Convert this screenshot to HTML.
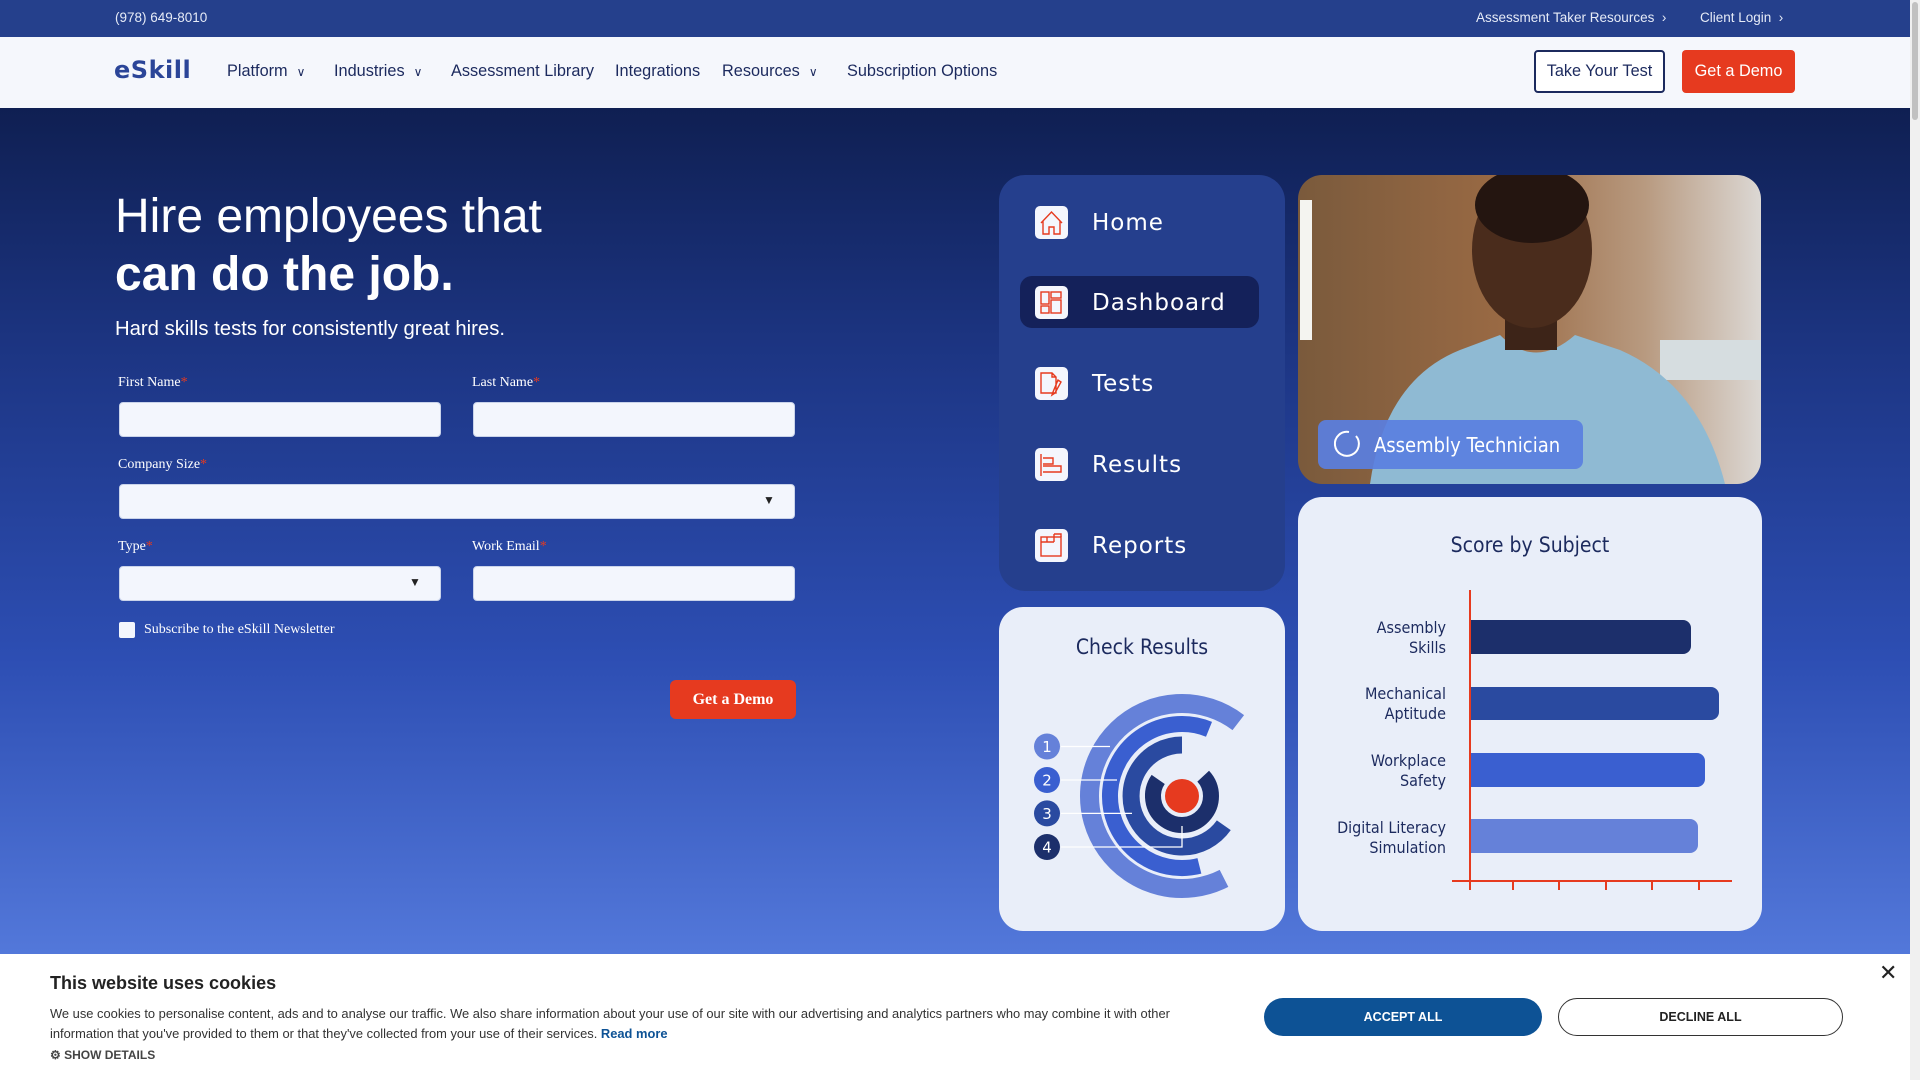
<!DOCTYPE html>
<html><head><meta charset="utf-8"><style>
*{margin:0;padding:0;box-sizing:border-box}
body{width:1920px;height:1080px;overflow:hidden;position:relative;font-family:"Liberation Sans",sans-serif;background:#fff}
.a{position:absolute;white-space:nowrap}
.top{left:0;top:0;width:1910px;height:37px;background:#25408c}
.nav{left:0;top:37px;width:1910px;height:71px;background:#f5f7fc}
.hero{left:0;top:108px;width:1910px;height:846px;background:linear-gradient(180deg,#0f1f52 0%,#1d3685 30%,#2d4eb3 65%,#5378da 100%)}
.navi{font-size:16.3px;color:#1c2a5e;top:62px}
.lbl{font-family:"Liberation Serif",serif;font-size:14px;color:#fff}
.lbl b{color:#e63a1f;font-weight:normal}
.inp{background:#f3f6fd;border:1px solid #c9d3ea;border-radius:4px;height:35px}
.mi{font-family:"DejaVu Sans",sans-serif;font-size:23px;color:#fff;letter-spacing:1px}
.sl{font-family:"DejaVu Sans Condensed","DejaVu Sans",sans-serif;font-size:16px;color:#1c2a5e;text-align:right;line-height:19px}
</style></head><body>
<div class="a top"></div>
<div class="a" style="left:115px;top:10px;font-size:13.5px;color:#e6ebf7">(978) 649-8010</div>
<div class="a" style="left:1476px;top:10px;font-size:13.5px;color:#e6ebf7">Assessment Taker Resources &nbsp;›</div>
<div class="a" style="left:1700px;top:10px;font-size:13.5px;color:#e6ebf7">Client Login &nbsp;›</div>
<div class="a nav"></div>
<div class="a" style="left:114px;top:56px;font-family:'DejaVu Sans',sans-serif;font-weight:bold;font-size:24px;color:#2b4598;letter-spacing:0.5px">eSkill</div>
<div class="a navi" style="left:227px">Platform &nbsp;<span style="font-size:12px">&#8744;</span></div>
<div class="a navi" style="left:334px">Industries &nbsp;<span style="font-size:12px">&#8744;</span></div>
<div class="a navi" style="left:451px">Assessment Library</div>
<div class="a navi" style="left:615px">Integrations</div>
<div class="a navi" style="left:722px">Resources &nbsp;<span style="font-size:12px">&#8744;</span></div>
<div class="a navi" style="left:847px">Subscription Options</div>
<div class="a" style="left:1534px;top:50px;width:131px;height:43px;border:2px solid #1c2a5e;border-radius:4px;background:#fff;font-size:16.3px;color:#1c2a5e;text-align:center;line-height:39px">Take Your Test</div>
<div class="a" style="left:1682px;top:50px;width:113px;height:43px;border-radius:4px;background:#e63a1f;font-size:16.3px;color:#fff;text-align:center;line-height:43px">Get a Demo</div>
<div class="a" style="left:1910px;top:0;width:10px;height:1080px;background:#f0f0f0"></div>
<div class="a" style="left:1912px;top:2px;width:6px;height:118px;background:#c1c1c1;border-radius:3px"></div>
<div class="a hero"></div>

<div class="a" style="left:115px;top:188px;font-size:48px;color:#fff;line-height:58px">Hire employees that<br><b>can do the job.</b></div>
<div class="a" style="left:115px;top:318px;font-size:20.3px;color:#fff">Hard skills tests for consistently great hires.</div>
<div class="a lbl" style="left:118px;top:375px">First Name<b>*</b></div>
<div class="a lbl" style="left:472px;top:375px">Last Name<b>*</b></div>
<div class="a inp" style="left:119px;top:402px;width:322px"></div>
<div class="a inp" style="left:473px;top:402px;width:322px"></div>
<div class="a lbl" style="left:118px;top:457px">Company Size<b>*</b></div>
<div class="a inp" style="left:119px;top:484px;width:676px"></div>
<div class="a" style="left:763px;top:493px;font-size:12px;color:#222">&#9660;</div>
<div class="a lbl" style="left:118px;top:539px">Type<b>*</b></div>
<div class="a lbl" style="left:472px;top:539px">Work Email<b>*</b></div>
<div class="a inp" style="left:119px;top:566px;width:322px"></div>
<div class="a" style="left:409px;top:575px;font-size:12px;color:#222">&#9660;</div>
<div class="a inp" style="left:473px;top:566px;width:322px"></div>
<div class="a" style="left:119px;top:622px;width:16px;height:16px;background:#f3f6fd;border-radius:2px"></div>
<div class="a lbl" style="left:144px;top:622px">Subscribe to the eSkill Newsletter</div>
<div class="a" style="left:670px;top:680px;width:126px;height:39px;background:#e63a1f;border-radius:6px;font-family:'Liberation Serif',serif;font-weight:bold;font-size:16px;color:#fff;text-align:center;line-height:39px">Get a Demo</div>

<div class="a" style="left:999px;top:175px;width:286px;height:416px;background:#253f8d;border-radius:26px"></div>
<div class="a" style="left:1020px;top:276px;width:239px;height:52px;background:#14215a;border-radius:12px"></div>
<svg class="a" style="left:0;top:0" width="1920" height="1080" viewBox="0 0 1920 1080">
<g fill="#f4f6fd"><rect x="1035" y="206" width="33" height="33" rx="5"/><rect x="1035" y="286" width="33" height="33" rx="5"/><rect x="1035" y="367" width="33" height="33" rx="5"/><rect x="1035" y="448" width="33" height="33" rx="5"/><rect x="1035" y="529" width="33" height="33" rx="5"/></g>
<g fill="none" stroke="#e63a1f" stroke-width="1.4">
<path d="M1041 223 L1051.5 212 L1062 223 M1043 221 V234 H1049 V227 H1054 V234 H1060 V221"/>
<rect x="1041" y="292" width="8" height="12"/><rect x="1041" y="306" width="8" height="7"/><rect x="1051" y="292" width="10" height="6"/><rect x="1051" y="300" width="10" height="13"/>
<path d="M1041 373 H1052 L1056 377 V393 H1041 Z M1052 373 V377 H1056 M1058 380 L1053 392 L1052 395 L1055 393 L1061 382 Z"/>
<path d="M1041 454 V476 M1043 458 H1053 V464 H1043 M1043 466 H1061 V472 H1043"/>
<rect x="1041" y="537" width="20" height="19"/><path d="M1041 542 H1054 M1047 537 V542 M1054 534 H1061 V537 M1054 534 V542"/>
</g>
<rect x="999" y="607" width="286" height="324" rx="24" fill="#e9eef9"/>
<rect x="1298" y="497" width="464" height="434" rx="24" fill="#e9eef9"/>
<g fill="none">
<path d="M1238.3 722.6 A92.5 92.5 0 1 0 1224 878.4" stroke="#6581d9" stroke-width="19"/>
<path d="M1209 729.3 A72 72 0 1 0 1199.4 865.9" stroke="#3a5fd0" stroke-width="16"/>
<path d="M1182 745 A51 51 0 1 0 1223.8 825.3" stroke="#2a4aa0" stroke-width="17"/>
<path d="M1203.2 776.2 A29 29 0 1 1 1158.2 779.4" stroke="#1c2f6b" stroke-width="16"/>
<g stroke="#fff" stroke-width="1.3"><path d="M1061 746.5 H1110 M1061 780 H1117 M1061 813.4 H1132 M1061 847 H1182 V826"/></g>
</g>
<circle cx="1182" cy="796" r="17" fill="#e63a1f"/>
<g font-family="DejaVu Sans,sans-serif" font-size="15" fill="#fff" text-anchor="middle">
<circle cx="1047" cy="746.5" r="13" fill="#6581d9"/><text x="1047" y="752">1</text>
<circle cx="1047" cy="780" r="13" fill="#3a5fd0"/><text x="1047" y="785.5">2</text>
<circle cx="1047" cy="813.4" r="13" fill="#2a4aa0"/><text x="1047" y="819">3</text>
<circle cx="1047" cy="847" r="13" fill="#1c2f6b"/><text x="1047" y="852.5">4</text>
</g>
<g font-family="DejaVu Sans Condensed,DejaVu Sans,sans-serif" font-size="21" fill="#1c2a5e" text-anchor="middle">
<text x="1142" y="654">Check Results</text><text x="1530" y="552">Score by Subject</text></g>
<path d="M1470 620 H1683 a8 8 0 0 1 8 8 V646 a8 8 0 0 1 -8 8 H1470Z" fill="#1c2f6b"/>
<path d="M1470 687 H1711 a8 8 0 0 1 8 8 V712 a8 8 0 0 1 -8 8 H1470Z" fill="#2a4aa0"/>
<path d="M1470 753 H1697 a8 8 0 0 1 8 8 V779 a8 8 0 0 1 -8 8 H1470Z" fill="#3a5fd0"/>
<path d="M1470 819 H1690 a8 8 0 0 1 8 8 V845 a8 8 0 0 1 -8 8 H1470Z" fill="#6581d9"/>
<g stroke="#e63a1f" stroke-width="2"><path d="M1470 590 V890 M1452 881 H1732 M1513 881 V890 M1559 881 V890 M1606 881 V890 M1652 881 V890 M1699 881 V890"/></g>
<g font-family="DejaVu Sans Condensed,DejaVu Sans,sans-serif" font-size="16" fill="#1c2a5e" text-anchor="end">
<text x="1446" y="633">Assembly</text><text x="1446" y="653">Skills</text>
<text x="1446" y="699">Mechanical</text><text x="1446" y="719">Aptitude</text>
<text x="1446" y="766">Workplace</text><text x="1446" y="786">Safety</text>
<text x="1446" y="833">Digital Literacy</text><text x="1446" y="853">Simulation</text>
</g>
<defs><clipPath id="pc"><rect x="1298" y="175" width="463" height="309" rx="24"/></clipPath>
<linearGradient id="bg" x1="0" x2="1" y1="0" y2="0"><stop offset="0" stop-color="#7a5a3c"/><stop offset="0.45" stop-color="#9a6a44"/><stop offset="0.75" stop-color="#b89a80"/><stop offset="1" stop-color="#dcd8d4"/></linearGradient></defs>
<g clip-path="url(#pc)">
<rect x="1298" y="175" width="463" height="309" fill="url(#bg)"/>
<rect x="1300" y="200" width="12" height="140" fill="#f4f4f0"/>
<rect x="1660" y="340" width="101" height="40" fill="#d6dde0"/>
<path d="M1370 484 Q1385 380 1460 350 L1500 335 Q1535 370 1575 335 L1620 350 Q1700 385 1725 484Z" fill="#8fbad3"/>
<rect x="1505" y="300" width="52" height="50" fill="#3d2418"/>
<ellipse cx="1532" cy="250" rx="60" ry="78" fill="#4a2c1c"/>
<ellipse cx="1532" cy="205" rx="57" ry="38" fill="#241510"/>
<rect x="1318" y="420" width="265" height="49" rx="8" fill="#5a7fe0" opacity="0.92"/>
<path d="M1349 432 A12 12 0 1 0 1356 436" fill="none" stroke="#fff" stroke-width="2"/>
<text x="1374" y="452" font-family="DejaVu Sans Condensed,DejaVu Sans,sans-serif" font-size="20" fill="#fff">Assembly Technician</text>
</g>
</svg>
<div class="a mi" style="left:1092px;top:210px">Home</div>
<div class="a mi" style="left:1092px;top:290px">Dashboard</div>
<div class="a mi" style="left:1092px;top:371px">Tests</div>
<div class="a mi" style="left:1092px;top:452px">Results</div>
<div class="a mi" style="left:1092px;top:533px">Reports</div>

<div class="a" style="left:0;top:954px;width:1910px;height:126px;background:#fff"></div>
<div class="a" style="left:50px;top:973px;font-size:18px;font-weight:bold;color:#222">This website uses cookies</div>
<div class="a" style="left:50px;top:1004px;font-size:12.9px;color:#333;line-height:20px">We use cookies to personalise content, ads and to analyse our traffic. We also share information about your use of our site with our advertising and analytics partners who may combine it with other<br>information that you've provided to them or that they've collected from your use of their services. <b style="color:#0d5295">Read more</b></div>
<div class="a" style="left:50px;top:1048px;font-size:12px;font-weight:bold;color:#444">&#9881; SHOW DETAILS</div>
<div class="a" style="left:1264px;top:998px;width:278px;height:38px;border-radius:19px;background:#0d5295;color:#fff;font-size:12.5px;font-weight:bold;text-align:center;line-height:38px">ACCEPT ALL</div>
<div class="a" style="left:1558px;top:998px;width:285px;height:38px;border-radius:19px;border:1px solid #333;color:#222;font-size:12.5px;font-weight:bold;text-align:center;line-height:36px">DECLINE ALL</div>
<div class="a" style="left:1879px;top:960px;font-size:22px;color:#222">&#10005;</div>
</body></html>
